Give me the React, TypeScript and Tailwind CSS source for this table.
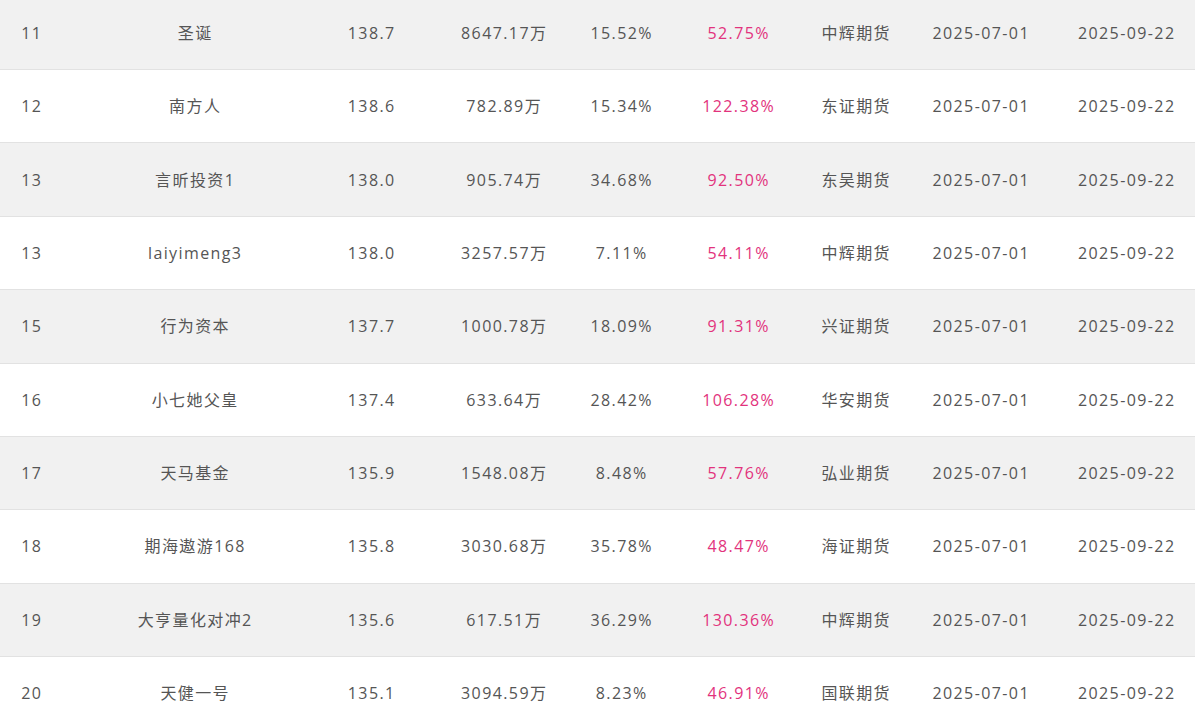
import React from "react"

type Row = {
    rank: string
    name: string
    score: string
    scale: string
    drawdown: string
    ret: string
    broker: string
    start: string
    end: string
}

const rows: Row[] = [
    { rank: "11", name: "圣诞", score: "138.7", scale: "8647.17万", drawdown: "15.52%", ret: "52.75%", broker: "中辉期货", start: "2025-07-01", end: "2025-09-22" },
    { rank: "12", name: "南方人", score: "138.6", scale: "782.89万", drawdown: "15.34%", ret: "122.38%", broker: "东证期货", start: "2025-07-01", end: "2025-09-22" },
    { rank: "13", name: "言昕投资1", score: "138.0", scale: "905.74万", drawdown: "34.68%", ret: "92.50%", broker: "东吴期货", start: "2025-07-01", end: "2025-09-22" },
    { rank: "13", name: "laiyimeng3", score: "138.0", scale: "3257.57万", drawdown: "7.11%", ret: "54.11%", broker: "中辉期货", start: "2025-07-01", end: "2025-09-22" },
    { rank: "15", name: "行为资本", score: "137.7", scale: "1000.78万", drawdown: "18.09%", ret: "91.31%", broker: "兴证期货", start: "2025-07-01", end: "2025-09-22" },
    { rank: "16", name: "小七她父皇", score: "137.4", scale: "633.64万", drawdown: "28.42%", ret: "106.28%", broker: "华安期货", start: "2025-07-01", end: "2025-09-22" },
    { rank: "17", name: "天马基金", score: "135.9", scale: "1548.08万", drawdown: "8.48%", ret: "57.76%", broker: "弘业期货", start: "2025-07-01", end: "2025-09-22" },
    { rank: "18", name: "期海遨游168", score: "135.8", scale: "3030.68万", drawdown: "35.78%", ret: "48.47%", broker: "海证期货", start: "2025-07-01", end: "2025-09-22" },
    { rank: "19", name: "大亨量化对冲2", score: "135.6", scale: "617.51万", drawdown: "36.29%", ret: "130.36%", broker: "中辉期货", start: "2025-07-01", end: "2025-09-22" },
    { rank: "20", name: "天健一号", score: "135.1", scale: "3094.59万", drawdown: "8.23%", ret: "46.91%", broker: "国联期货", start: "2025-07-01", end: "2025-09-22" },
]

function Cell({ children, pink }: { children: React.ReactNode; pink?: boolean }) {
    return (
        <div className={`flex items-center justify-center whitespace-nowrap pl-[1.4px] ${pink ? "text-[#e2337d]" : "text-[#555555]"}`}>
            {children}
        </div>
    )
}

export default function App() {
    return (
        <div
            className="w-[1195px] h-[725px] overflow-hidden bg-white text-[16px] tracking-[1.4px]"
            style={{ fontFamily: '"Open Sans", "Noto Sans CJK SC", sans-serif' }}
        >
            {/* ranking table, scrolled a little past row 10 */}
            <div className="-mt-[3.375px]">
                {rows.map((r, i) => (
                    <div
                        key={r.rank + r.name}
                        className={`grid grid-cols-[62px_265px_88px_177px_58px_176px_59px_191px_100px_1fr] h-[73.375px] border-b border-[#e2e2e2] ${i % 2 === 0 ? "bg-[#f1f1f1]" : "bg-white"}`}
                    >
                        <Cell>{r.rank}</Cell>
                        <Cell>{r.name}</Cell>
                        <Cell>{r.score}</Cell>
                        <Cell>{r.scale}</Cell>
                        <Cell>{r.drawdown}</Cell>
                        <Cell pink>{r.ret}</Cell>
                        <Cell>{r.broker}</Cell>
                        <Cell>{r.start}</Cell>
                        <Cell>{r.end}</Cell>
                        <div />
                    </div>
                ))}
            </div>
        </div>
    )
}
